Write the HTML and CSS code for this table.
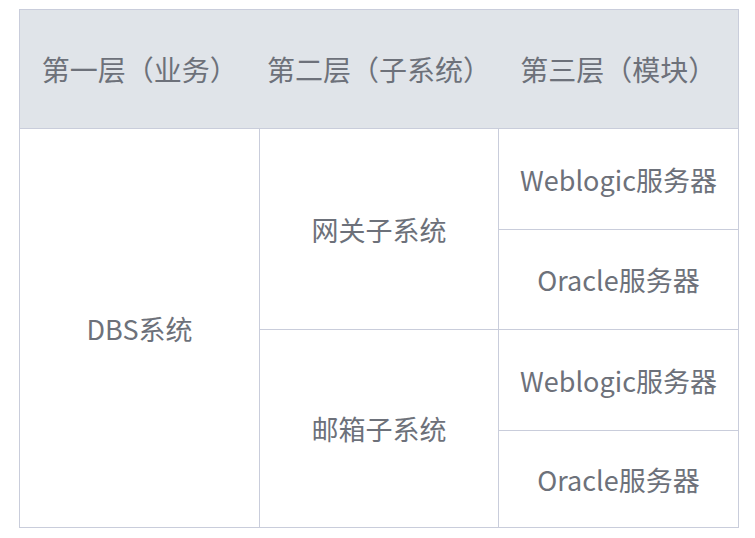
FILE: index.html
```html
<!DOCTYPE html>
<html lang="zh">
<head>
<meta charset="utf-8">
<link rel="stylesheet" href="styles.css">
</head>
<body>
<table class="layers">
  <colgroup>
    <col class="c1"><col class="c2"><col class="c3">
  </colgroup>
  <thead>
    <tr class="head"><th>第一层（业务）</th><th>第二层（子系统）</th><th>第三层（模块）</th></tr>
  </thead>
  <tbody>
    <tr class="r1"><td rowspan="4">DBS系统</td><td rowspan="2">网关子系统</td><td>Weblogic服务器</td></tr>
    <tr class="r2"><td>Oracle服务器</td></tr>
    <tr class="r3"><td rowspan="2">邮箱子系统</td><td>Weblogic服务器</td></tr>
    <tr class="r4"><td>Oracle服务器</td></tr>
  </tbody>
</table>
</body>
</html>
```
FILE: styles.css
```css
html, body { margin: 0; padding: 0; background: #ffffff; }
body { padding: 9px 0 0 19px; }
.layers {
  border-collapse: collapse;
  table-layout: fixed;
  width: 719px;
  font-family: "Noto Sans CJK SC", "Noto Sans", sans-serif;
  font-size: 27px;
  color: #6d717a;
}
.c1 { width: 240px; }
.c2 { width: 239px; }
.c3 { width: 240px; }
.layers th, .layers td {
  border: 1px solid #c9cddb;
  text-align: center;
  vertical-align: middle;
  padding: 0;
  font-weight: 400;
  white-space: nowrap;
}
.layers th {
  background: #e0e4e9;
  border-left: none;
  border-right: none;
  font-size: 28px;
}
.layers th:first-child { border-left: 1px solid #c9cddb; }
.layers th:last-child { border-right: 1px solid #c9cddb; }
.head { height: 119px; }
.r1 { height: 101px; }
.r2 { height: 100px; }
.r3 { height: 101px; }
.r4 { height: 97px; }
```
